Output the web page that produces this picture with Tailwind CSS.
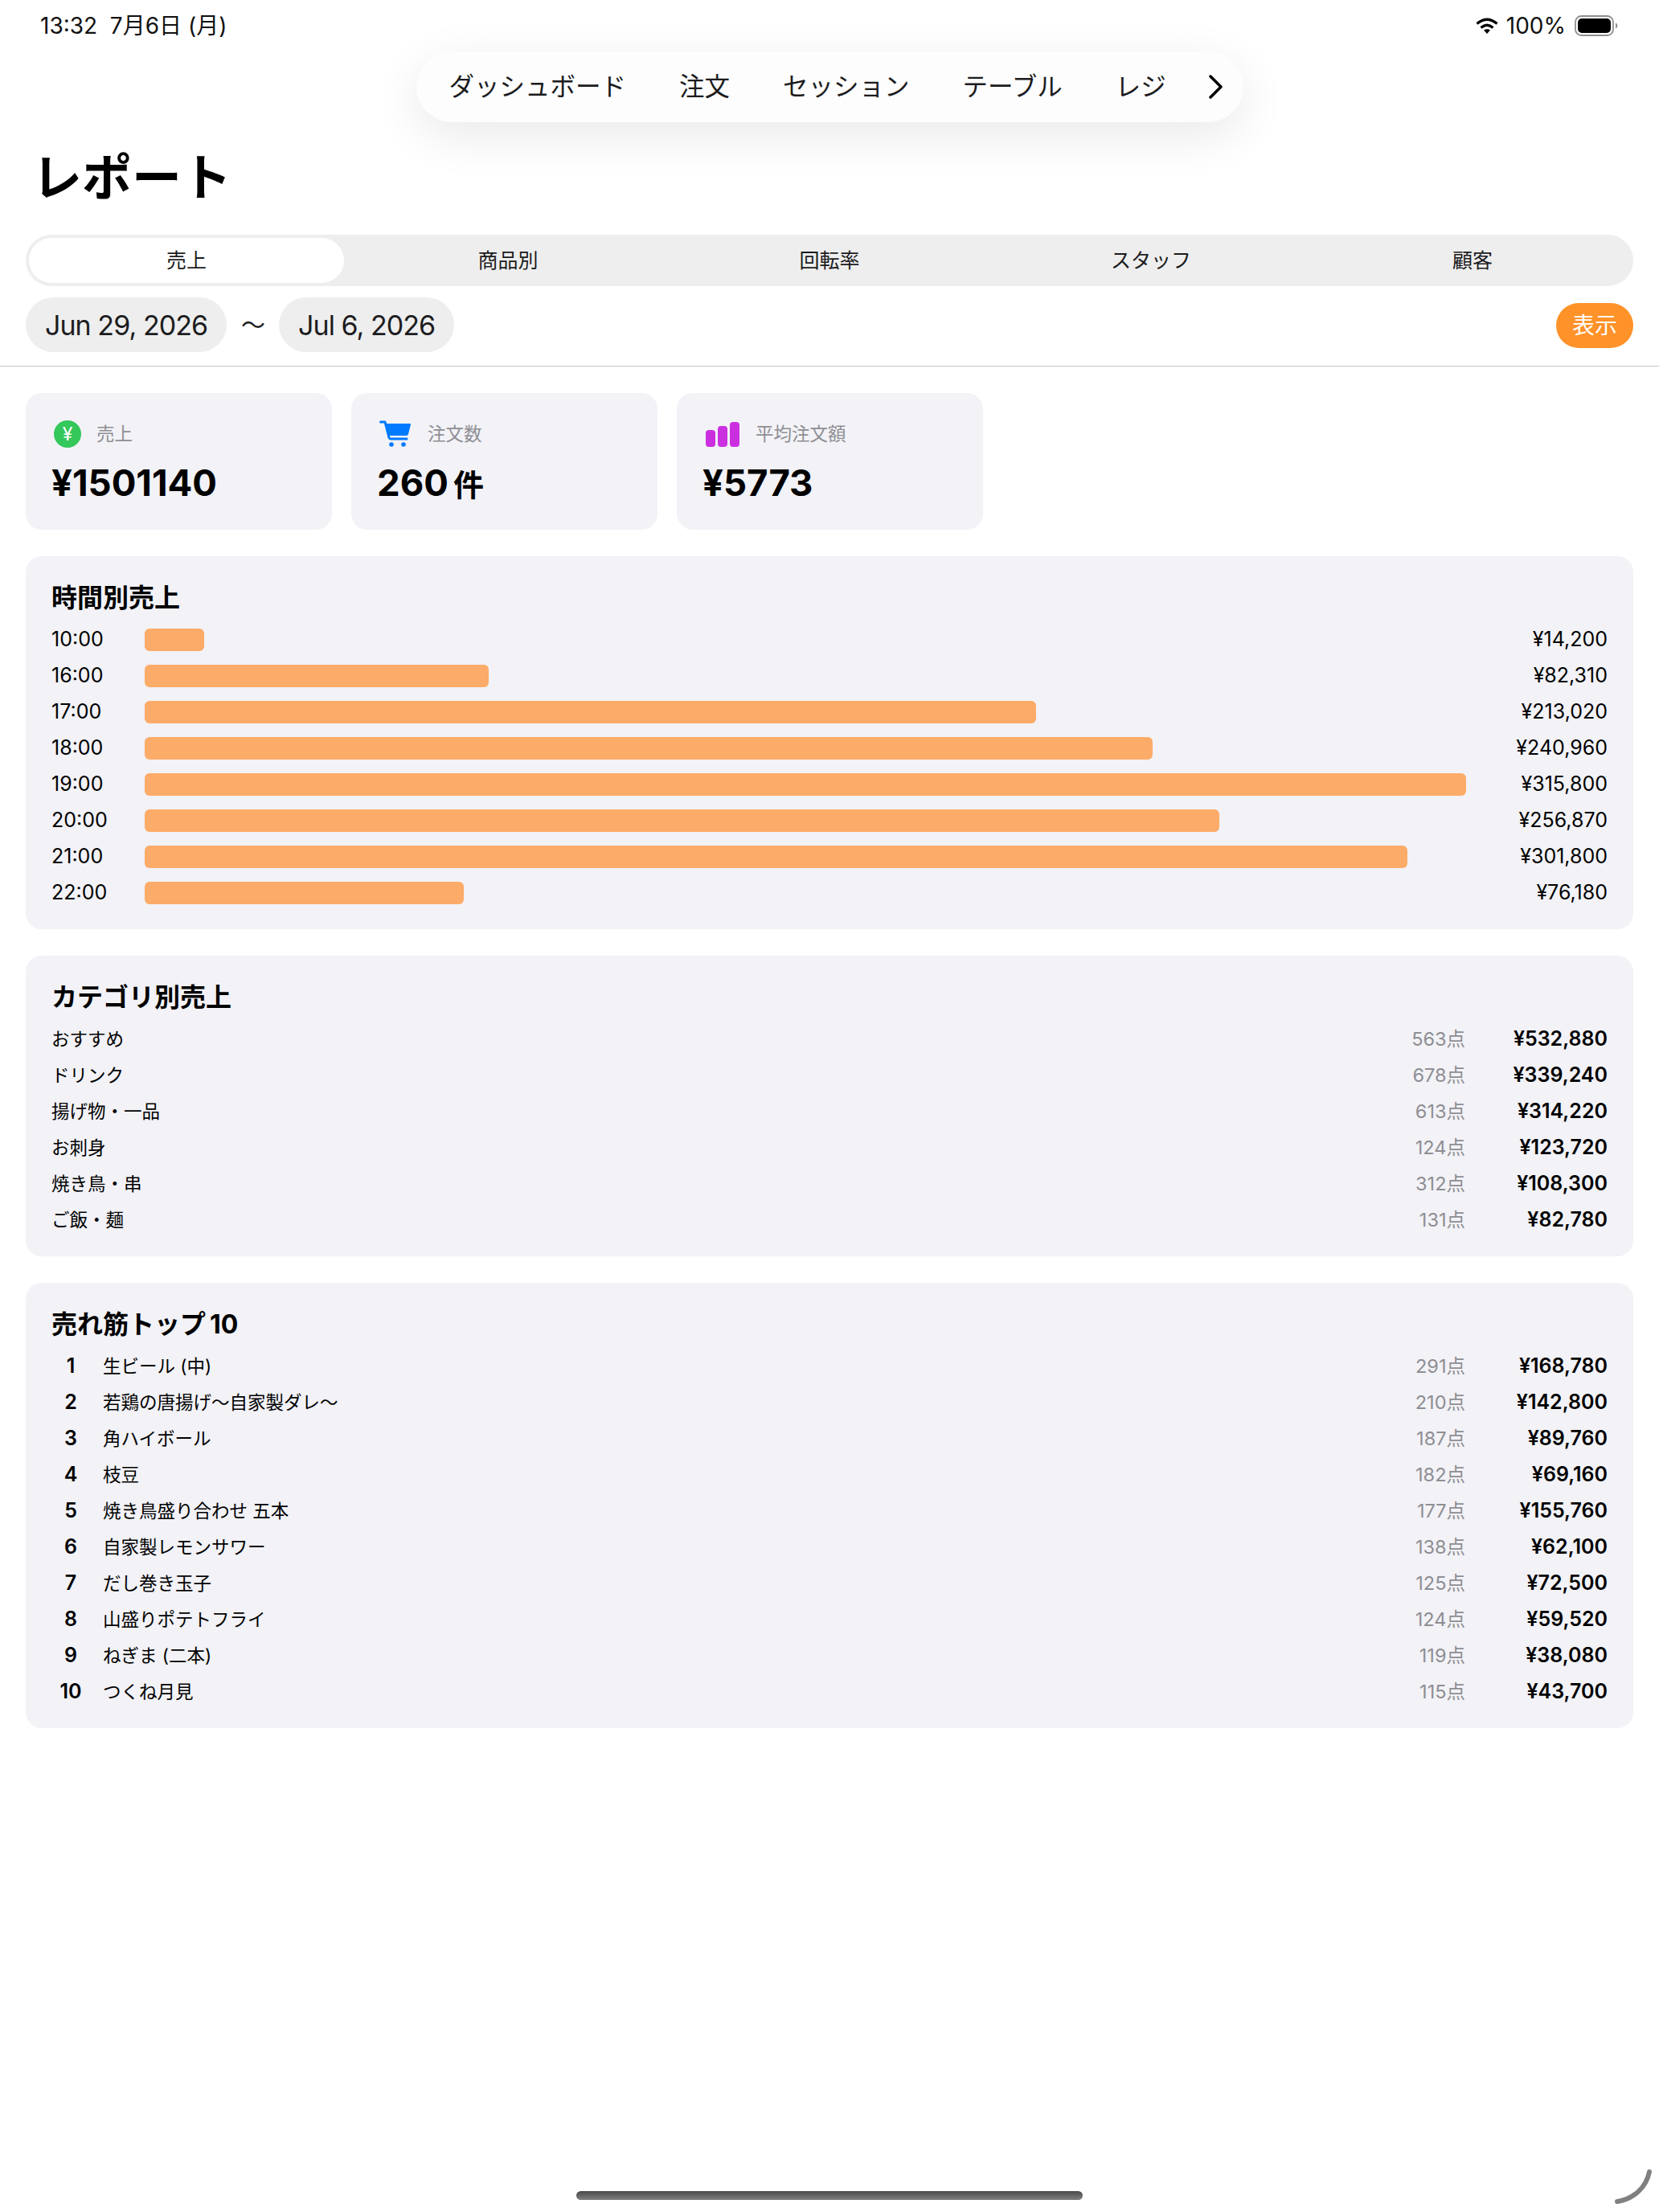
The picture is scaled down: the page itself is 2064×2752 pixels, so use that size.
<!DOCTYPE html>
<html lang="ja">
<head>
<meta charset="UTF-8">
<title>レポート</title>
<script src="https://cdn.jsdelivr.net/npm/@tailwindcss/browser@4"></script>
</head>
<body class="bg-white text-black font-['Inter','Noto_Sans_CJK_JP',sans-serif]">
<div class="relative w-[2064px] h-[2752px] overflow-hidden flex flex-col">

  <!-- status bar -->
  <div class="flex items-center justify-between h-[64px] pl-[50px] pr-[51px] text-[28px] text-[#111]">
    <span>13:32&nbsp;&nbsp;7月6日 (月)</span>
    <div class="flex items-center">
      <svg width="28" height="20" viewBox="0 0 28 20" fill="none" stroke="#000" stroke-width="3.200"><path d="M1.500 7.500Q14-3 26.500 7.500"/><path d="M6.500 12.500Q14 6 21.500 12.500"/><path d="M10 15.500Q14 13 18 15.500L14 20z" fill="#000" stroke="none"/></svg>
      <span class="ml-[10px]">100%</span>
      <svg width="54" height="26" viewBox="0 0 54 26" class="ml-[11px]"><rect x="1" y="1" width="47" height="24" rx="7.500" fill="none" stroke="#8e8e93" stroke-width="1.800"/><rect x="4" y="4" width="41" height="18" rx="5" fill="#000"/><path d="M51 9.500c1.500.6 2.300 1.900 2.300 3.500s-.8 2.900-2.300 3.500z" fill="#8e8e93"/></svg>
    </div>
  </div>

  <!-- floating nav -->
  <div class="self-center flex items-center h-[88px] w-[1029px] pl-[41px] rounded-[44px] bg-[#fdfdfd] shadow-[0_16px_60px_rgba(0,0,0,0.09)] text-[31.500px] text-[#1c1c1e]">
    <span>ダッシュボード</span>
    <span class="ml-[66px]">注文</span>
    <span class="ml-[66px]">セッション</span>
    <span class="ml-[66px]">テーブル</span>
    <span class="ml-[66px]">レジ</span>
    <svg width="20" height="30" viewBox="0 0 20 30" class="ml-[52px]"><path d="M3 2l13 13L3 28" fill="none" stroke="#000" stroke-width="3.500" stroke-linecap="round" stroke-linejoin="round"/></svg>
  </div>

  <h1 class="pl-[40px] mt-[30px] h-[80px] leading-[80px] text-[62px] font-bold">レポート</h1>

  <!-- tabs -->
  <div class="mx-[32px] mt-[30px] h-[64px] rounded-[32px] bg-[#eeeeee] grid grid-cols-5 text-[25px] text-[#1c1c1e] text-center leading-[56px]">
    <div class="m-[4px] rounded-[28px] bg-white">売上</div>
    <div class="py-[4px]">商品別</div>
    <div class="py-[4px]">回転率</div>
    <div class="py-[4px]">スタッフ</div>
    <div class="py-[4px]">顧客</div>
  </div>

  <!-- date range -->
  <div class="flex items-center mx-[32px] mt-[14px] h-[68px] text-[34px] tracking-[-0.95px] text-[#1c1c1e]">
    <span class="flex items-center h-[68px] px-[24px] rounded-[34px] bg-[#eeeeee]">Jun 29, 2026</span>
    <span class="w-[65px] text-center text-[30px]">〜</span>
    <span class="flex items-center h-[68px] px-[24px] rounded-[34px] bg-[#eeeeee]">Jul 6, 2026</span>
    <span class="ml-auto mt-[2px] flex items-center h-[56px] px-[20px] rounded-[28px] bg-[#ff9229] text-white text-[28px] tracking-normal">表示</span>
  </div>
  <div class="mt-[17px] h-[1px] bg-[#c6c6c8]"></div>

  <main class="flex flex-col gap-[33px] px-[32px] pt-[33px]">
    <!-- stats -->
    <div class="flex gap-[24px]">
      <div class="w-[381px] h-[170px] rounded-[20px] bg-[#f2f2f7] pl-[32px] pt-[34px]">
        <div class="flex items-center h-[34px]">
          <span class="flex items-center justify-center w-[34px] h-[34px] rounded-full bg-[#34c759] text-white text-[23px] ml-[3px]">¥</span>
          <span class="ml-[19px] text-[22.500px] text-[#8e8e93]">売上</span>
        </div>
        <div class="mt-[18px] text-[45.500px] leading-[52px] font-bold">¥1501140</div>
      </div>
      <div class="w-[381px] h-[170px] rounded-[20px] bg-[#f2f2f7] pl-[32px] pt-[34px]">
        <div class="flex items-center h-[34px]">
          <svg width="40" height="34" viewBox="0 0 40 34" class="ml-[3px]"><path d="M1.500 2H7l5 19.500q.4 1.500 2 1.500h20" fill="none" stroke="#007aff" stroke-width="3" stroke-linecap="round" stroke-linejoin="round"/><path d="M8 4h30q1 0 1 1l-3 12q-.5 2-2.500 2H12z" fill="#007aff"/><circle cx="15" cy="30" r="2.800" fill="#007aff"/><circle cx="30" cy="30" r="2.800" fill="#007aff"/></svg>
          <span class="ml-[20px] text-[22.500px] text-[#8e8e93]">注文数</span>
        </div>
        <div class="mt-[18px] text-[45.500px] leading-[52px] font-bold">260<span class="ml-[6px] text-[38px]">件</span></div>
      </div>
      <div class="w-[381px] h-[170px] rounded-[20px] bg-[#f2f2f7] pl-[32px] pt-[34px]">
        <div class="flex items-center h-[34px]">
          <svg width="42" height="31" viewBox="0 0 42 31" class="ml-[4px]"><rect x="0" y="10" width="12" height="21" rx="4" fill="#cb30e0"/><rect x="15" y="5" width="12" height="26" rx="4" fill="#cb30e0"/><rect x="30" y="0" width="12" height="31" rx="4" fill="#cb30e0"/></svg>
          <span class="ml-[20px] text-[22.500px] text-[#8e8e93]">平均注文額</span>
        </div>
        <div class="mt-[18px] text-[45.500px] leading-[52px] font-bold">¥5773</div>
      </div>
    </div>

    <!-- hourly -->
    <section class="h-[464px] rounded-[20px] bg-[#f2f2f7] px-[32px] pt-[30px]">
      <h2 class="text-[32px] leading-[44px] font-bold">時間別売上</h2>
      <div class="mt-[7px] flex flex-col text-[25px]">
        <div class="flex items-center h-[45px]"><span class="w-[116px]">10:00</span><div class="flex-1 pr-[16px]"><div class="h-[28px] rounded-[6px] bg-[#fdab68]" style="width:4.5%"></div></div><span class="w-[160px] text-right">¥14,200</span></div>
        <div class="flex items-center h-[45px]"><span class="w-[116px]">16:00</span><div class="flex-1 pr-[16px]"><div class="h-[28px] rounded-[6px] bg-[#fdab68]" style="width:26.06%"></div></div><span class="w-[160px] text-right">¥82,310</span></div>
        <div class="flex items-center h-[45px]"><span class="w-[116px]">17:00</span><div class="flex-1 pr-[16px]"><div class="h-[28px] rounded-[6px] bg-[#fdab68]" style="width:67.45%"></div></div><span class="w-[160px] text-right">¥213,020</span></div>
        <div class="flex items-center h-[45px]"><span class="w-[116px]">18:00</span><div class="flex-1 pr-[16px]"><div class="h-[28px] rounded-[6px] bg-[#fdab68]" style="width:76.3%"></div></div><span class="w-[160px] text-right">¥240,960</span></div>
        <div class="flex items-center h-[45px]"><span class="w-[116px]">19:00</span><div class="flex-1 pr-[16px]"><div class="h-[28px] rounded-[6px] bg-[#fdab68]" style="width:100%"></div></div><span class="w-[160px] text-right">¥315,800</span></div>
        <div class="flex items-center h-[45px]"><span class="w-[116px]">20:00</span><div class="flex-1 pr-[16px]"><div class="h-[28px] rounded-[6px] bg-[#fdab68]" style="width:81.34%"></div></div><span class="w-[160px] text-right">¥256,870</span></div>
        <div class="flex items-center h-[45px]"><span class="w-[116px]">21:00</span><div class="flex-1 pr-[16px]"><div class="h-[28px] rounded-[6px] bg-[#fdab68]" style="width:95.57%"></div></div><span class="w-[160px] text-right">¥301,800</span></div>
        <div class="flex items-center h-[45px]"><span class="w-[116px]">22:00</span><div class="flex-1 pr-[16px]"><div class="h-[28px] rounded-[6px] bg-[#fdab68]" style="width:24.12%"></div></div><span class="w-[160px] text-right">¥76,180</span></div>
      </div>
    </section>

    <!-- category -->
    <section class="h-[374px] rounded-[20px] bg-[#f2f2f7] px-[32px] pt-[30px]">
      <h2 class="text-[32px] leading-[44px] font-bold">カテゴリ別売上</h2>
      <div class="mt-[7px] flex flex-col text-[22.500px]">
        <div class="flex items-center h-[45px]"><span class="flex-1">おすすめ</span><span class="text-[23.500px] text-[#8e8e93]">563点</span><span class="w-[177px] text-right font-semibold text-[25px]">¥532,880</span></div>
        <div class="flex items-center h-[45px]"><span class="flex-1">ドリンク</span><span class="text-[23.500px] text-[#8e8e93]">678点</span><span class="w-[177px] text-right font-semibold text-[25px]">¥339,240</span></div>
        <div class="flex items-center h-[45px]"><span class="flex-1">揚げ物・一品</span><span class="text-[23.500px] text-[#8e8e93]">613点</span><span class="w-[177px] text-right font-semibold text-[25px]">¥314,220</span></div>
        <div class="flex items-center h-[45px]"><span class="flex-1">お刺身</span><span class="text-[23.500px] text-[#8e8e93]">124点</span><span class="w-[177px] text-right font-semibold text-[25px]">¥123,720</span></div>
        <div class="flex items-center h-[45px]"><span class="flex-1">焼き鳥・串</span><span class="text-[23.500px] text-[#8e8e93]">312点</span><span class="w-[177px] text-right font-semibold text-[25px]">¥108,300</span></div>
        <div class="flex items-center h-[45px]"><span class="flex-1">ご飯・麺</span><span class="text-[23.500px] text-[#8e8e93]">131点</span><span class="w-[177px] text-right font-semibold text-[25px]">¥82,780</span></div>
      </div>
    </section>

    <!-- top 10 -->
    <section class="h-[554px] rounded-[20px] bg-[#f2f2f7] px-[32px] pt-[30px]">
      <h2 class="text-[32px] leading-[44px] font-bold">売れ筋トップ<span class="ml-[5px]">10</span></h2>
      <div class="mt-[7px] flex flex-col text-[22.500px]">
        <div class="flex items-center h-[45px]"><span class="w-[48px] text-center font-semibold text-[25px]">1</span><span class="ml-[16px] flex-1">生ビール (中)</span><span class="text-[23.500px] text-[#8e8e93]">291点</span><span class="w-[177px] text-right font-semibold text-[25px]">¥168,780</span></div>
        <div class="flex items-center h-[45px]"><span class="w-[48px] text-center font-semibold text-[25px]">2</span><span class="ml-[16px] flex-1">若鶏の唐揚げ〜自家製ダレ〜</span><span class="text-[23.500px] text-[#8e8e93]">210点</span><span class="w-[177px] text-right font-semibold text-[25px]">¥142,800</span></div>
        <div class="flex items-center h-[45px]"><span class="w-[48px] text-center font-semibold text-[25px]">3</span><span class="ml-[16px] flex-1">角ハイボール</span><span class="text-[23.500px] text-[#8e8e93]">187点</span><span class="w-[177px] text-right font-semibold text-[25px]">¥89,760</span></div>
        <div class="flex items-center h-[45px]"><span class="w-[48px] text-center font-semibold text-[25px]">4</span><span class="ml-[16px] flex-1">枝豆</span><span class="text-[23.500px] text-[#8e8e93]">182点</span><span class="w-[177px] text-right font-semibold text-[25px]">¥69,160</span></div>
        <div class="flex items-center h-[45px]"><span class="w-[48px] text-center font-semibold text-[25px]">5</span><span class="ml-[16px] flex-1">焼き鳥盛り合わせ 五本</span><span class="text-[23.500px] text-[#8e8e93]">177点</span><span class="w-[177px] text-right font-semibold text-[25px]">¥155,760</span></div>
        <div class="flex items-center h-[45px]"><span class="w-[48px] text-center font-semibold text-[25px]">6</span><span class="ml-[16px] flex-1">自家製レモンサワー</span><span class="text-[23.500px] text-[#8e8e93]">138点</span><span class="w-[177px] text-right font-semibold text-[25px]">¥62,100</span></div>
        <div class="flex items-center h-[45px]"><span class="w-[48px] text-center font-semibold text-[25px]">7</span><span class="ml-[16px] flex-1">だし巻き玉子</span><span class="text-[23.500px] text-[#8e8e93]">125点</span><span class="w-[177px] text-right font-semibold text-[25px]">¥72,500</span></div>
        <div class="flex items-center h-[45px]"><span class="w-[48px] text-center font-semibold text-[25px]">8</span><span class="ml-[16px] flex-1">山盛りポテトフライ</span><span class="text-[23.500px] text-[#8e8e93]">124点</span><span class="w-[177px] text-right font-semibold text-[25px]">¥59,520</span></div>
        <div class="flex items-center h-[45px]"><span class="w-[48px] text-center font-semibold text-[25px]">9</span><span class="ml-[16px] flex-1">ねぎま (二本)</span><span class="text-[23.500px] text-[#8e8e93]">119点</span><span class="w-[177px] text-right font-semibold text-[25px]">¥38,080</span></div>
        <div class="flex items-center h-[45px]"><span class="w-[48px] text-center font-semibold text-[25px]">10</span><span class="ml-[16px] flex-1">つくね月見</span><span class="text-[23.500px] text-[#8e8e93]">115点</span><span class="w-[177px] text-right font-semibold text-[25px]">¥43,700</span></div>
      </div>
    </section>
  </main>

  <div class="absolute left-[717px] top-[2726px] w-[630px] h-[11px] rounded-full bg-linear-to-b from-[#4a4a4a] to-[#808080]"></div>
  <svg class="absolute left-[2000px] top-[2690px]" width="64" height="62" viewBox="0 0 64 62"><path d="M12 49c20-3 36-17 40-37" fill="none" stroke="#808080" stroke-width="6" stroke-linecap="round"/></svg>
</div>
</body>
</html>
